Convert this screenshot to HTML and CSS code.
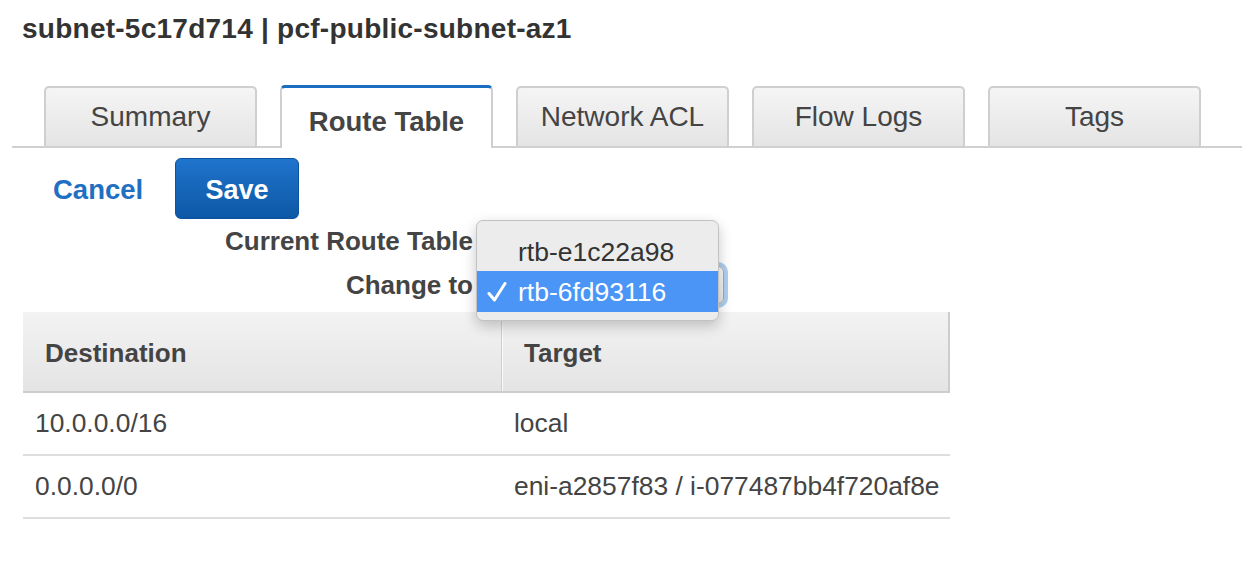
FILE: index.html
```html
<!DOCTYPE html>
<html>
<head>
<meta charset="utf-8">
<link rel="stylesheet" href="styles.css">
</head>
<body>
<h1 class="title">subnet-5c17d714 | pcf-public-subnet-az1</h1>

<div class="tabs">
  <div class="tab">Summary</div>
  <div class="tab active">Route Table</div>
  <div class="tab">Network ACL</div>
  <div class="tab">Flow Logs</div>
  <div class="tab">Tags</div>
</div>

<div class="actions">
  <a class="cancel">Cancel</a>
  <button class="save">Save</button>
</div>

<div class="form">
  <div class="label">Current Route Table</div>
  <div class="value"></div>
  <div class="label">Change to</div>
  <div class="value"><div class="select"></div></div>

  <div class="menu">
    <div class="item">rtb-e1c22a98</div>
    <div class="item selected"><svg class="check" width="20" height="20" viewBox="0 0 20 20"><path d="M2 11.5 L7.5 18 L18 1.5" fill="none" stroke="#fff" stroke-width="3" stroke-linecap="round" stroke-linejoin="round"/></svg>rtb-6fd93116</div>
  </div>
</div>

<div class="table">
  <div class="thead">
    <div class="th first">Destination</div>
    <div class="th">Target</div>
  </div>
  <div class="row">
    <div class="td first">10.0.0.0/16</div>
    <div class="td">local</div>
  </div>
  <div class="row">
    <div class="td first">0.0.0.0/0</div>
    <div class="td">eni-a2857f83 / i-077487bb4f720af8e</div>
  </div>
</div>
</body>
</html>
```

FILE: styles.css
```css
body {
  margin: 0;
  font-family: "Liberation Sans", Arial, sans-serif;
  color: #444;
  background: #fff;
}

.title {
  margin: 0;
  padding: 13px 0 0 22px;
  font-size: 28px;
  line-height: 32px;
  letter-spacing: 0.25px;
  font-weight: bold;
  color: #333;
}

.tabs {
  display: flex;
  align-items: flex-end;
  gap: 23px;
  margin: 40px 0 0 12px;
  padding-left: 32px;
  border-bottom: 2px solid #d0d0d0;
}

.tab {
  box-sizing: border-box;
  width: 213px;
  height: 60px;
  border: 2px solid #cfcfcf;
  border-bottom: none;
  border-radius: 5px 5px 0 0;
  background: linear-gradient(#f5f5f5, #e4e4e4);
  font-size: 28px;
  line-height: 58px;
  text-align: center;
  color: #444;
}

.tab.active {
  height: 63px;
  margin-bottom: -2px;
  background: #fff;
  border-top: 3px solid #1a6dc0;
  font-weight: bold;
  font-size: 27.5px;
  line-height: 68px;
}

.actions {
  display: flex;
  align-items: center;
  gap: 31px;
  margin-top: 10px;
  padding-left: 53px;
}

.cancel {
  width: 91px;
  padding-top: 3px;
  font-size: 27.5px;
  font-weight: bold;
  color: #1f6fc2;
  white-space: nowrap;
}

.save {
  box-sizing: border-box;
  width: 124px;
  height: 61px;
  padding: 3px 0 0;
  border: 1px solid #0d529c;
  border-radius: 6px;
  background: linear-gradient(#1f74cc, #0d58a6);
  color: #fff;
  font-family: "Liberation Sans", Arial, sans-serif;
  font-size: 27px;
  font-weight: bold;
}

.form {
  position: relative;
  display: grid;
  grid-template-columns: 473px 244px;
  column-gap: 7px;
  row-gap: 6px;
  margin-top: 3px;
}

.label {
  height: 38px;
  line-height: 38px;
  text-align: right;
  font-size: 26px;
  font-weight: bold;
  color: #444;
}

.value {
  height: 38px;
}

.select {
  box-sizing: border-box;
  height: 38px;
  border: 1px solid #a9a9a9;
  border-radius: 6px;
  background: linear-gradient(#fafafa, #e8e8e8);
  box-shadow: 0 0 0 4px rgba(110, 165, 230, 0.55);
}

.menu {
  position: absolute;
  left: 476px;
  top: -2px;
  box-sizing: border-box;
  width: 243px;
  height: 101px;
  padding-top: 12px;
  background: #ececec;
  border: 1px solid #c2c2c2;
  border-radius: 7px;
  box-shadow: 0 5px 14px rgba(0, 0, 0, 0.22);
  overflow: hidden;
}

.item {
  position: relative;
  height: 38px;
  line-height: 38px;
  padding-left: 41px;
  font-size: 26.5px;
  color: #333;
}

.item.selected {
  height: 41px;
  line-height: 43px;
  background: #4a95f6;
  color: #fff;
}

.check {
  position: absolute;
  left: 10px;
  top: 11px;
}

.table {
  width: 927px;
  margin: 8px 0 0 23px;
}

.thead {
  display: flex;
  height: 79px;
  background: linear-gradient(#f3f3f3, #e4e4e4);
  border-bottom: 2px solid #cdcdcd;
  border-right: 2px solid #cdcdcd;
}

.th {
  flex: 1;
  padding-left: 22px;
  line-height: 82px;
  font-size: 26px;
  font-weight: bold;
  color: #444;
}

.th.first {
  flex: 0 0 456px;
  border-right: 1px solid #cfcfcf;
  box-shadow: 1px 0 0 #fafafa;
}

.row {
  display: flex;
  height: 61px;
  border-bottom: 2px solid #dedede;
}

.td {
  flex: 1;
  padding-left: 12px;
  line-height: 60px;
  font-size: 26.4px;
  color: #444;
}

.td.first {
  flex: 0 0 467px;
}
```
